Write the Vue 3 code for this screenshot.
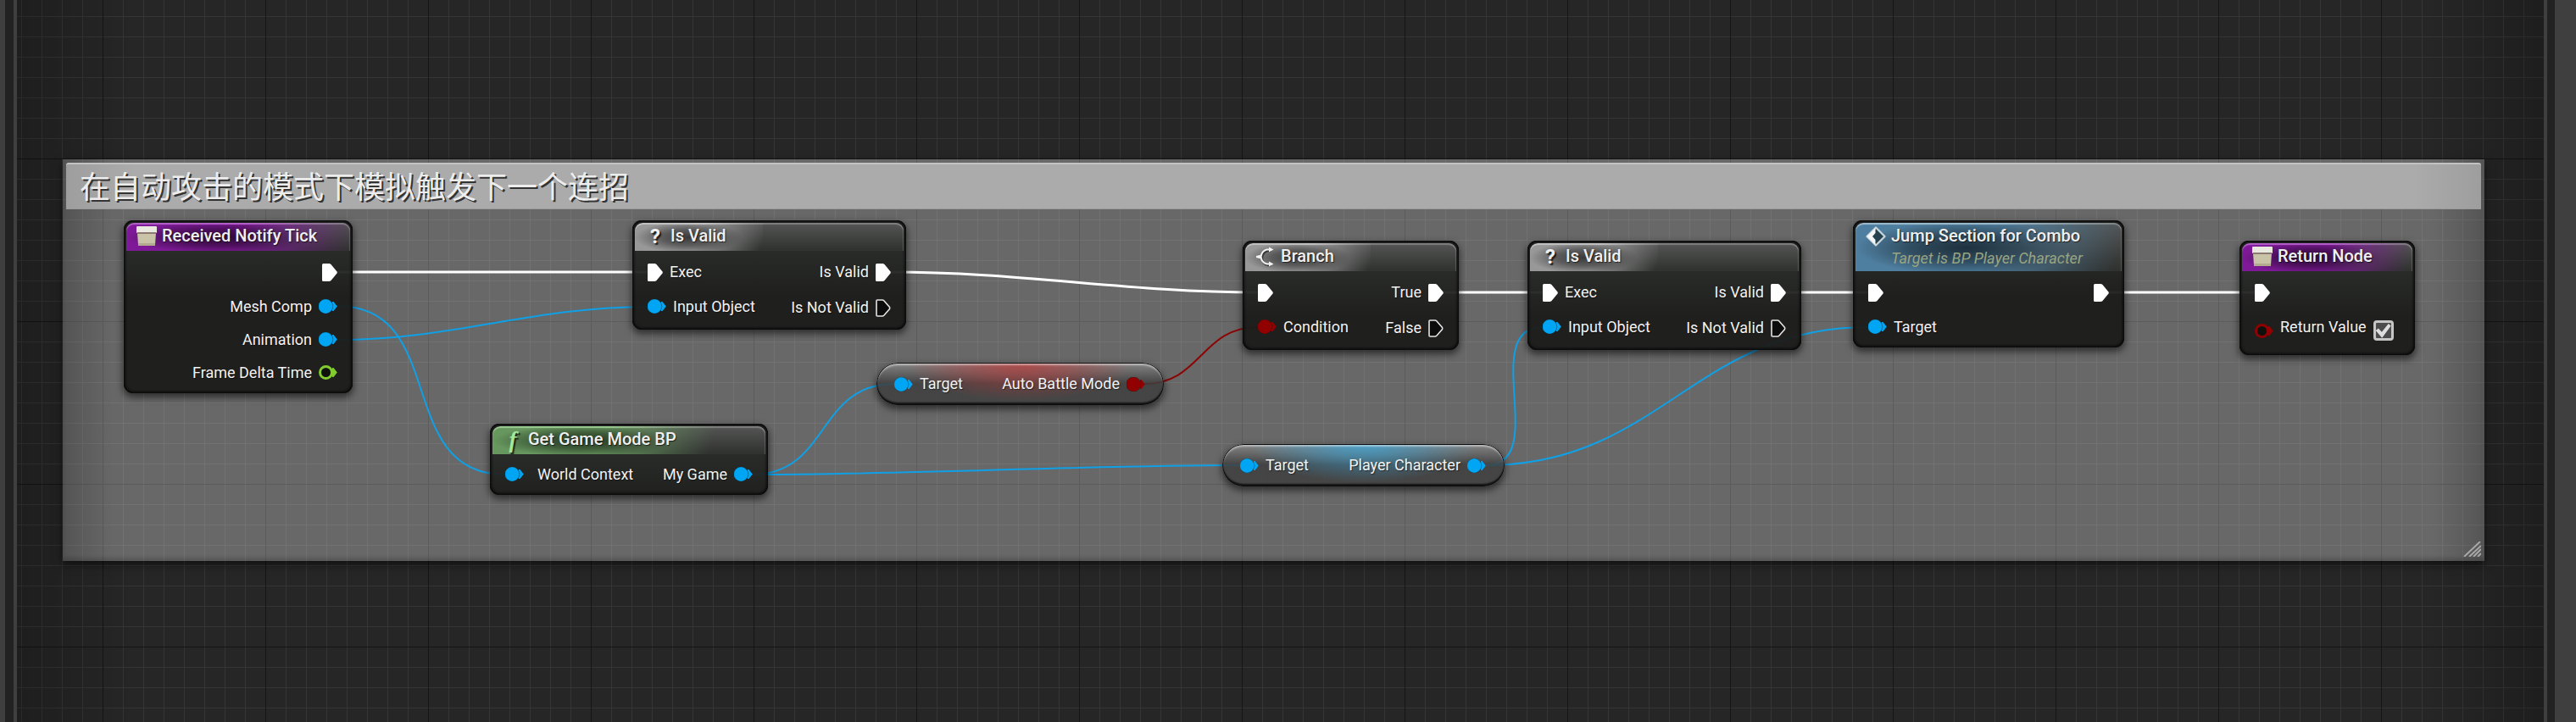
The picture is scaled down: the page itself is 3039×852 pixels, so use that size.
<script setup>
const comment = { text: '在自动攻击的模式下模拟触发下一个连招', x: 54, y: 188, w: 2857, h: 474 }

const nodes = [
  {
    id: 'tick', tone: 'purple', icon: 'box', title: 'Received Notify Tick', x: 126, y: 260, w: 270,
    inputs: [],
    outputs: [
      { kind: 'exec', on: true },
      { kind: 'object', on: true, label: 'Mesh Comp' },
      { kind: 'object', on: true, label: 'Animation' },
      { kind: 'float', label: 'Frame Delta Time' },
    ],
  },
  {
    id: 'valid-a', tone: 'grey', icon: 'question', title: 'Is Valid', x: 726, y: 260, w: 323,
    inputs: [{ kind: 'exec', on: true, label: 'Exec' }, { kind: 'object', on: true, label: 'Input Object' }],
    outputs: [{ kind: 'exec', on: true, label: 'Is Valid' }, { kind: 'exec', label: 'Is Not Valid' }],
  },
  {
    id: 'mode', tone: 'green', icon: 'function', title: 'Get Game Mode BP', x: 558, y: 500, w: 328,
    inputs: [{ kind: 'object', on: true, label: 'World Context', spaced: true }],
    outputs: [{ kind: 'object', on: true, label: 'My Game' }],
  },
  {
    id: 'auto', tone: 'red', pill: true, x: 1014, y: 428, w: 339,
    inputs: [{ kind: 'object', on: true, label: 'Target' }],
    outputs: [{ kind: 'bool', on: true, label: 'Auto Battle Mode' }],
  },
  {
    id: 'branch', tone: 'grey', icon: 'branch', title: 'Branch', x: 1446, y: 284, w: 255,
    inputs: [{ kind: 'exec', on: true }, { kind: 'bool', on: true, label: 'Condition' }],
    outputs: [{ kind: 'exec', on: true, label: 'True' }, { kind: 'exec', label: 'False' }],
  },
  {
    id: 'player', tone: 'sky', pill: true, x: 1422, y: 524, w: 333,
    inputs: [{ kind: 'object', on: true, label: 'Target' }],
    outputs: [{ kind: 'object', on: true, label: 'Player Character' }],
  },
  {
    id: 'valid-b', tone: 'grey', icon: 'question', title: 'Is Valid', x: 1782, y: 284, w: 323,
    inputs: [{ kind: 'exec', on: true, label: 'Exec' }, { kind: 'object', on: true, label: 'Input Object' }],
    outputs: [{ kind: 'exec', on: true, label: 'Is Valid' }, { kind: 'exec', label: 'Is Not Valid' }],
  },
  {
    id: 'jump', tone: 'blue', icon: 'event', title: 'Jump Section for Combo', subtitle: 'Target is BP Player Character',
    x: 2166, y: 260, w: 320,
    inputs: [{ kind: 'exec', on: true }, { kind: 'object', on: true, label: 'Target' }],
    outputs: [{ kind: 'exec', on: true }],
  },
  {
    id: 'return', tone: 'purple', icon: 'box', title: 'Return Node', x: 2622, y: 284, w: 207,
    inputs: [{ kind: 'exec', on: true }, { kind: 'bool', label: 'Return Value', checkbox: true }],
    outputs: [],
  },
]

const links = [
  ['exec', 378, 321, 744, 321],
  ['object', 378, 361, 576, 560],
  ['object', 378, 401, 744, 362],
  ['exec', 1031, 321, 1464, 345],
  ['object', 867, 560, 1035, 453],
  ['object', 867, 560, 1443, 549],
  ['bool', 1330, 453, 1464, 386],
  ['exec', 1683, 345, 1800, 345],
  ['object', 1733, 549, 1800, 386],
  ['object', 1733, 549, 2184, 386],
  ['exec', 2087, 345, 2184, 345],
  ['exec', 2468, 345, 2640, 345],
]

/* Hermite spline whose tangents grow with the distance between the two pins */
function wire([, x1, y1, x2, y2]) {
  const t = Math.round((Math.abs(x2 - x1) + Math.abs(y2 - y1)) / 3)
  return `M${x1} ${y1}C${x1 + t} ${y1} ${x2 - t} ${y2} ${x2} ${y2}`
}

const place = (n) => ({ left: n.x + 'px', top: n.y + 'px', width: n.w + 'px' })
</script>

<template>
  <div class="editor">
    <div class="rail rail-left"></div>
    <main class="canvas">
      <section class="comment" :style="{ ...place(comment), height: comment.h + 'px' }">
        <h1 class="comment-title">{{ comment.text }}</h1>
        <svg class="grip" width="21" height="18" viewBox="0 0 21 18">
          <path d="M1 18L20 0M7 18L21 5M12 18L21 9M17 18L21 14" />
        </svg>
      </section>

      <svg class="wires">
        <path v-for="(l, i) in links" :key="i" :class="l[0]" :d="wire(l)" />
      </svg>

      <article
        v-for="n in nodes"
        :key="n.id"
        class="node"
        :class="[n.tone, { pill: n.pill }]"
        :style="place(n)"
      >
        <header v-if="n.title" class="head">
          <div class="head-main">
            <span class="icon">
              <svg v-if="n.icon === 'box'" width="24" height="24" viewBox="0 0 24 24">
                <path d="M1 8H23L22 22Q22 23 21 23H3Q2 23 2 22Z" fill="#c9c3a7" />
                <path d="M2 20H22V22Q22 23 21 23H3Q2 23 2 22Z" fill="#b3ab8e" />
                <rect x="0" y="0" width="24" height="8" rx="1" fill="#e9e9e0" />
                <rect x="1" y="7" width="22" height="2" fill="#8d7a74" />
              </svg>
              <span v-else-if="n.icon === 'question'" class="glyph question">?</span>
              <span v-else-if="n.icon === 'function'" class="glyph function">f</span>
              <svg v-else-if="n.icon === 'branch'" width="24" height="24" viewBox="0 0 24 24">
                <g fill="none" stroke="#111" stroke-opacity=".6" stroke-width="2.4" transform="translate(1.5 1.5)">
                  <path d="M17 3.5H13Q7 5 6.500 12Q7 19 13 20.500H17" />
                </g>
                <path d="M17 3.500H13.500Q7.500 5 6.500 12Q7.500 19 13.500 20.500H17" fill="none" stroke="#f2f2f2" stroke-width="2" />
                <path d="M1 11L7 9.500V14.500L1 13ZM16 .5L21.500 3.500L16 6.500ZM16 17.500L21.500 20.500L16 23.500Z" fill="#f2f2f2" />
              </svg>
              <svg v-else width="24" height="24" viewBox="0 0 24 24">
                <path d="M12 1.500L22.500 12L12 22.500L1.500 12Z" fill="#24414f" stroke="#c9d6dc" stroke-width="2.200" stroke-linejoin="round" />
                <path d="M1.500 12L11.500 2V8L8 12L11.500 16V22Z" fill="#f4f6f7" />
              </svg>
            </span>
            <div class="titles">
              <h2 class="title">{{ n.title }}</h2>
              <p v-if="n.subtitle" class="subtitle">{{ n.subtitle }}</p>
            </div>
          </div>
        </header>

        <div class="body">
          <ul v-for="side in ['inputs', 'outputs']" :key="side" class="pins" :class="side">
            <li
              v-for="(p, i) in n[side]"
              :key="i"
              class="pin"
              :class="[p.kind, { spaced: p.spaced, editable: p.checkbox }]"
            >
              <svg v-if="p.kind === 'exec'" class="shape" width="18" height="21" viewBox="0 0 18 21">
                <path v-if="p.on" d="M1.500 0H8Q9.500 0 10.500 1L17.500 9.500Q18 10.500 17.500 11.500L10.500 20Q9.500 21 8 21H1.500Q0 21 0 19.500V1.500Q0 0 1.500 0Z" fill="#fff" />
                <path v-else d="M2 1H8Q9 1 10 2L16.500 9.500Q17 10.500 16.500 11.500L10 19Q9 20 8 20H2Q1 20 1 19V2Q1 1 2 1Z" fill="#0c0c0c" stroke="#e4e4e4" stroke-width="1.600" />
              </svg>
              <svg v-else class="shape" width="22" height="17" viewBox="0 0 22 17">
                <path class="tip" d="M16 3L17.500 3L21.800 8.500L17.500 14L16 14Z" />
                <circle v-if="p.on" class="dot" cx="8.200" cy="8.500" r="8.600" />
                <circle v-else class="ring" cx="8.500" cy="8.500" r="7" />
              </svg>
              <label v-if="p.checkbox" class="label" for="return-value">{{ p.label }}</label>
              <span v-else-if="p.label" class="label">{{ p.label }}</span>
              <input v-if="p.checkbox" id="return-value" class="check" type="checkbox" checked />
            </li>
          </ul>
        </div>
      </article>
    </main>
    <div class="rail rail-right"></div>
  </div>
</template>

<style>
body {
  margin: 0;
  background: #222;
}
</style>

<style scoped>
.editor {
  display: flex;
  min-height: 100vh;
  font-family: Roboto, "Noto Sans CJK SC", sans-serif;
  color: #f2f2f2;
}

.rail {
  flex: none;
  box-sizing: border-box;
  background: #222;
  border: solid #3f3f3f;
}

.rail-left {
  width: 20px;
  border-width: 0 4px 0 6px;
}

.rail-right {
  width: 38px;
  border-width: 0 25px 0 4px;
}

.canvas {
  position: relative;
  flex: 1;
  overflow: hidden;
  background-color: #262626;
  background-image:
    linear-gradient(to right, rgba(0, 0, 0, .22), transparent 140px),
    linear-gradient(to left, rgba(0, 0, 0, .22), transparent 140px),
    linear-gradient(to right, #151515 1px, transparent 1px),
    linear-gradient(to bottom, #151515 1px, transparent 1px),
    linear-gradient(to right, #353535 1px, transparent 1px),
    linear-gradient(to bottom, #353535 1px, transparent 1px);
  background-size: auto, auto, 192px 192px, 192px 192px, 24px 24px, 24px 24px;
  background-position: 0 0, 0 0, 101px 0, 0 187px, 5px 0, 0 19px;
}

.comment {
  position: absolute;
  box-sizing: border-box;
  padding: 4px;
  background:
    linear-gradient(to right, rgba(0, 0, 0, .16), transparent 60px),
    linear-gradient(to left, rgba(0, 0, 0, .16), transparent 60px),
    rgba(255, 255, 255, .304);
  box-shadow: 0 4px 10px rgba(0, 0, 0, .6), inset 0 -4px 4px rgba(0, 0, 0, .16);
}

.comment-title {
  margin: 0;
  box-sizing: border-box;
  height: 55px;
  padding: 0 16px;
  border-top: 2px solid #c2c2c2;
  border-bottom: 1px solid #9a9a9a;
  border-radius: 3px 3px 0 0;
  background:
    linear-gradient(to left, rgba(0, 0, 0, .08), transparent 80px),
    linear-gradient(to right, rgba(0, 0, 0, .08), transparent 80px),
    #ababab;
  font: 400 36px/48px "Noto Sans CJK SC", sans-serif;
  color: #ededed;
  text-shadow: 2px 2px 0 #333;
}

.grip {
  position: absolute;
  right: 4px;
  bottom: 5px;
  fill: none;
  stroke: #a8a8a8;
  stroke-width: 2;
}

.wires {
  position: absolute;
  inset: 0;
  width: 100%;
  height: 100%;
  fill: none;
}

.wires .exec { stroke: #fff; stroke-width: 3; }
.wires .object { stroke: #0fa0e6; stroke-width: 2; }
.wires .bool { stroke: #8c0505; stroke-width: 2; }

.node {
  position: absolute;
  box-sizing: border-box;
  padding: 3px 3px 5px;
  border-radius: 11px;
  background: linear-gradient(rgba(38, 40, 38, .95) 36px, rgba(27, 28, 26, .95) 90px);
  box-shadow:
    inset 0 0 0 1px #0c0c0c,
    inset 0 0 3px 2px rgba(0, 0, 0, .7),
    0 4px 8px 1px rgba(0, 0, 0, .55);
}

.purple { --tone: #7e1a97; --shine: #b65fcb; }
.grey { --tone: #989898; --shine: #c4c4c4; }
.green { --tone: #67975f; --shine: #9ccb92; }
.blue { --tone: #4f7fa0; --shine: #9dbdcf; }
.red { --tone: rgba(190, 55, 55, .75); }
.sky { --tone: rgba(60, 165, 215, .8); }

.head {
  display: flex;
  min-height: 33px;
  border-radius: 9px 9px 0 0;
  overflow: hidden;
  background: linear-gradient(#545554, #2f312f);
  box-shadow: inset 0 2px 1px rgba(255, 255, 255, .25), inset -1px 0 1px rgba(255, 255, 255, .15);
}

.head-main {
  position: relative;
  display: flex;
  align-items: flex-start;
  gap: 6px;
  padding: 4px 43px 0 12px;
}

.head-main::before {
  content: "";
  position: absolute;
  inset: 0;
  border-radius: 9px 0 0 0;
  background:
    radial-gradient(ellipse 42% 56% at 42% 52%, rgba(0, 0, 0, .62), rgba(0, 0, 0, .4) 50%, transparent),
    var(--tone);
  box-shadow: inset 0 2px 1px var(--shine);
  -webkit-mask-image: linear-gradient(110deg, #000 50%, transparent 98%);
  mask-image: linear-gradient(110deg, #000 50%, transparent 98%);
}

.icon,
.titles {
  position: relative;
}

.icon {
  display: flex;
  justify-content: center;
  width: 24px;
  height: 24px;
}

.glyph {
  line-height: 24px;
  text-shadow: 2px 2px 1px rgba(0, 0, 0, .7);
}

.question { font-size: 24px; font-weight: 700; }
.function { font: italic 700 27px/24px "Liberation Serif", serif; color: #a4e89a; }

.title,
.subtitle {
  margin: 0;
  white-space: nowrap;
}

.title {
  font-size: 20px;
  line-height: 22px;
  font-weight: 500;
  color: #f0f0f0;
  text-shadow: 1px 1px 1px rgba(0, 0, 0, .6);
}

.subtitle {
  height: 31px;
  font-size: 18px;
  line-height: 32px;
  font-style: italic;
  color: #98a481;
}

.body {
  display: flex;
  justify-content: space-between;
  padding: 4px 15px 0;
}

.pins {
  margin: 0;
  padding: 0;
  list-style: none;
}

.pin {
  display: flex;
  align-items: center;
  gap: 8px;
  height: 39px;
}

.pin.exec { height: 42px; }
.pin.spaced { gap: 16px; }
.pin.editable { height: 48px; }
.pin.editable .label { padding-bottom: 8px; }
.outputs .pin { flex-direction: row-reverse; }

.shape { flex: none; display: block; }

.label {
  font-size: 18px;
  line-height: 24px;
  white-space: nowrap;
  text-shadow: 1px 1px 1px rgba(0, 0, 0, .5);
}

.object { --pin: #00a5f4; }
.pin.bool { --pin: #920101; }
.float { --pin: #82cc30; }

.dot { fill: var(--pin); }
.tip { fill: var(--pin); }
.object .dot, .pin.bool .dot { stroke: rgba(20, 22, 20, .35); stroke-width: 1; }
.ring { fill: #0e110c; stroke: var(--pin); stroke-width: 3; }

.check {
  position: relative;
  flex: none;
  width: 24px;
  height: 24px;
  margin: 0;
  box-sizing: border-box;
  appearance: none;
  border: 3px solid #c6c6c6;
  border-radius: 4px;
  background: #4c4c4c;
}

.check:checked::after {
  content: "";
  position: absolute;
  inset: 0;
  background: #dedede;
  clip-path: polygon(0 50%, 18% 36%, 40% 60%, 84% 6%, 100% 20%, 42% 98%);
}

.pill {
  height: 50px;
  padding: 3px;
  border-radius: 25px;
  background:
    radial-gradient(ellipse 40% 90% at 50% 0, var(--tone), transparent),
    linear-gradient(rgba(140, 140, 140, .85), rgba(62, 62, 62, .85) 48%, rgba(64, 64, 64, .85));
  box-shadow:
    inset 0 0 0 1px #0c0c0c,
    inset 0 3px 2px rgba(255, 255, 255, .45),
    inset 0 -3px 2px rgba(0, 0, 0, .75),
    0 4px 8px 1px rgba(0, 0, 0, .55);
}

.pill .body {
  align-items: center;
  height: 44px;
  padding: 0 19px 0 18px;
}
</style>
